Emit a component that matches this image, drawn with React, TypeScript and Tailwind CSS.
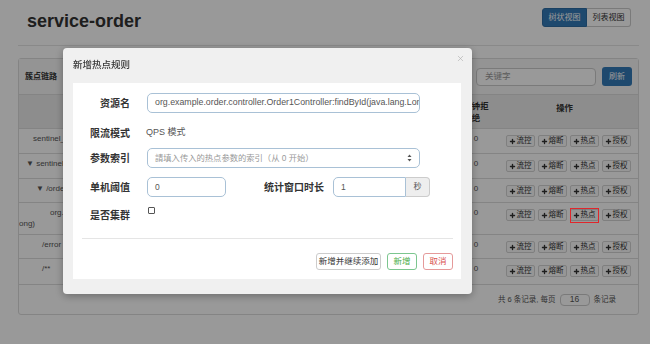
import { Plus, X } from "lucide-react";

const rows = [
    { h: "h-[25px]", pl: "pl-[14px]", lines: ["sentinel_default_context"] },
    { h: "h-[25px]", pl: "pl-[7px]", lines: ["▼ sentinel_spring_web_context"] },
    { h: "h-[24px]", pl: "pl-[17px]", lines: ["▼ /order/{id}"] },
    {
        h: "h-[32px]",
        pl: "pl-[31px]",
        lines: ["org.example.order.controller.Order1Controller:findById(java.lang.L", "ong)"],
    },
    { h: "h-[24px]", pl: "pl-[23px]", lines: ["/error"] },
    { h: "h-[26px]", pl: "pl-[23px]", lines: ["/**"] },
];

const actions = ["流控", "熔断", "热点", "授权"];

function ActionButton({ text, marked }: { text: string; marked?: boolean }) {
    return (
        <div className="relative flex h-[12px] w-[29px] items-center justify-center gap-[1px] rounded-[2px] border border-[#d4d4d4] bg-[#fafafa] text-[7.5px] text-[#333]">
            <Plus size={7} strokeWidth={4.5} />
            <span>{text}</span>
            {marked && (
                <div className="absolute -inset-x-[1px] -top-[2px] -bottom-[3px] z-50 border-[1.5px] border-[#e0262b]" />
            )}
        </div>
    );
}

function FormLabel({ children }: { children: React.ReactNode }) {
    return (
        <div className="w-[57px] shrink-0 text-right text-[10px] font-bold text-[#333]">{children}</div>
    );
}

export default function App() {
    return (
        <div className="relative h-[344px] w-[650px] overflow-hidden bg-white font-['Liberation_Sans','Noto_Sans_CJK_SC',sans-serif] text-[#333]">
            {/* Page */}
            <div className="pl-[18px] pr-[11px] pt-[8px]">
                <div className="flex items-start justify-between">
                    <h1 className="ml-[9px] mt-[2px] text-[18px] font-bold leading-[22px] text-[#333]">
                        service-order
                    </h1>
                    <div className="mr-[8px] flex text-[8px]">
                        <div className="flex h-[19px] w-[45px] items-center justify-center rounded-l-[3px] border border-[#2e6da4] bg-[#337ab7] text-white">
                            树状视图
                        </div>
                        <div className="flex h-[19px] w-[44px] items-center justify-center rounded-r-[3px] border border-l-0 border-[#ccc] bg-white text-[#333]">
                            列表视图
                        </div>
                    </div>
                </div>
                <div className="mt-[13px] border-t border-[#e5e5e5]" />

                {/* Panel */}
                <div className="mt-[12px] rounded-[3px] border border-[#ddd] bg-white">
                    <div className="flex h-[36px] items-center justify-between border-b border-[#ddd] bg-[#f7f7f7] pl-[6px] pr-[6px]">
                        <span className="text-[8px] font-bold">簇点链路</span>
                        <div className="flex items-center gap-[6px]">
                            <div className="flex h-[18px] w-[120px] items-center rounded-[4px] border border-[#ccc] bg-white px-[8px] text-[8.5px] text-[#999]">
                                关键字
                            </div>
                            <div className="flex h-[19px] w-[30px] items-center justify-center rounded-[3px] bg-[#337ab7] text-[8px] text-white">
                                刷新
                            </div>
                        </div>
                    </div>

                    {/* Table header */}
                    <div className="flex h-[34px] border-b border-[#ddd] bg-[#ececec] text-[8.4px] font-bold">
                        <div className="flex-1 pt-[7px] text-center">资源名</div>
                        <div className="w-[30px] pt-[5px] text-center leading-[12px]">分钟拒绝</div>
                        <div className="w-[147px] pt-[7px] text-center">操作</div>
                    </div>

                    {/* Table rows */}
                    {rows.map((row, i) => (
                        <div key={i} className={`flex border-b border-[#ddd] text-[8px] text-[#555] ${row.h}`}>
                            <div className="min-w-0 flex-1 overflow-hidden whitespace-nowrap pt-[4px] leading-[11px]">
                                <div className={row.pl}>{row.lines[0]}</div>
                                {row.lines[1] && <div>{row.lines[1]}</div>}
                            </div>
                            <div className="w-[30px] pt-[4px] text-center leading-[11px]">0</div>
                            <div className="flex w-[147px] items-start justify-center gap-[3px] pl-[7px] pt-[6px]">
                                {actions.map((a) => (
                                    <ActionButton key={a} text={a} marked={i === 3 && a === "热点"} />
                                ))}
                            </div>
                        </div>
                    ))}

                    {/* Pagination */}
                    <div className="flex h-[29px] items-center justify-end gap-[2px] pr-[22px] text-[7.5px] text-[#555]">
                        <span>共 6 条记录, 每页</span>
                        <div className="mx-[2px] flex h-[12px] w-[30px] items-center justify-center rounded-[4px] border border-[#ccc] bg-white text-[8.5px]">
                            16
                        </div>
                        <span>条记录</span>
                    </div>
                </div>
            </div>

            {/* Backdrop */}
            <div className="fixed inset-0 z-40 bg-black/40" />

            {/* Modal */}
            <div className="fixed left-[63px] top-[48px] z-50 w-[409px] rounded-[4px] bg-[#f0f0f0] pb-[15px] shadow-[0_2px_8px_rgba(0,0,0,0.3)]">
                <div className="relative flex h-[35px] items-center pl-[10px] text-[9.5px] font-medium text-[#333]">
                    新增热点规则
                    <X size={9} strokeWidth={1.5} className="absolute right-[7px] top-[6px] text-[#aaa]" />
                </div>
                <div className="mx-[10px] mr-[11px] bg-white pb-[9px] pt-[10px]">
                    <div className="flex h-[20px] items-center gap-[17px]">
                        <FormLabel>资源名</FormLabel>
                        <div className="flex h-[20px] w-[273px] items-center overflow-hidden whitespace-nowrap rounded-[5px] border border-[#a9c1d6] px-[7px] text-[8.8px] text-[#555]">
                            org.example.order.controller.Order1Controller:findById(java.lang.Long)
                        </div>
                    </div>
                    <div className="mt-[10px] flex h-[20px] items-center gap-[16px]">
                        <FormLabel>限流模式</FormLabel>
                        <span className="text-[9px] text-[#555]">QPS 模式</span>
                    </div>
                    <div className="mt-[5px] flex h-[20px] items-center gap-[17px]">
                        <FormLabel>参数索引</FormLabel>
                        <div className="flex h-[20px] w-[273px] items-center justify-between rounded-[5px] border border-[#a9c1d6] pl-[7px] pr-[7px] text-[8.3px] text-[#999]">
                            <span>請填入传入的热点参数的索引（从 0 开始）</span>
                            <svg width="5" height="8" viewBox="0 0 5 8" className="text-[#555]">
                                <path d="M2.5 0.5 L4.5 3 L0.5 3 Z" fill="currentColor" />
                                <path d="M2.5 7.5 L4.5 5 L0.5 5 Z" fill="currentColor" />
                            </svg>
                        </div>
                    </div>
                    <div className="mt-[9px] flex h-[20px] items-center">
                        <FormLabel>单机阈值</FormLabel>
                        <div className="ml-[17px] flex h-[20px] w-[79px] items-center rounded-[5px] border border-[#a9c1d6] px-[7px] text-[8.5px] text-[#555]">
                            0
                        </div>
                        <div className="ml-[38px] text-[10px] font-bold text-[#333]">统计窗口时长</div>
                        <div className="ml-[9px] flex h-[20px]">
                            <div className="flex h-[20px] w-[73px] items-center rounded-l-[5px] border border-[#a9c1d6] px-[7px] text-[8.5px] text-[#555]">
                                1
                            </div>
                            <div className="flex h-[20px] w-[24px] items-center justify-center rounded-r-[4px] border border-l-0 border-[#ccc] bg-[#eee] text-[8px] text-[#555]">
                                秒
                            </div>
                        </div>
                    </div>
                    <div className="mt-[8px] flex h-[20px] items-center gap-[18px]">
                        <FormLabel>是否集群</FormLabel>
                        <div className="-mt-[9px] h-[7px] w-[7px] rounded-[1px] border border-[#555] bg-white" />
                    </div>
                    <div className="mx-[9px] mr-[8px] mt-[13px] border-t border-[#e5e5e5]" />
                    <div className="mr-[8px] mt-[14px] flex justify-end gap-[6px] text-[8.5px]">
                        <div className="flex h-[17px] w-[65px] items-center justify-center rounded-[3px] border border-[#ccc] text-[#333]">
                            新增并继续添加
                        </div>
                        <div className="flex h-[17px] w-[30px] items-center justify-center rounded-[3px] border border-[#7cc68f] text-[#4cae4c]">
                            新增
                        </div>
                        <div className="flex h-[17px] w-[30px] items-center justify-center rounded-[3px] border border-[#e59a9a] text-[#d9534f]">
                            取消
                        </div>
                    </div>
                </div>
            </div>
        </div>
    );
}
